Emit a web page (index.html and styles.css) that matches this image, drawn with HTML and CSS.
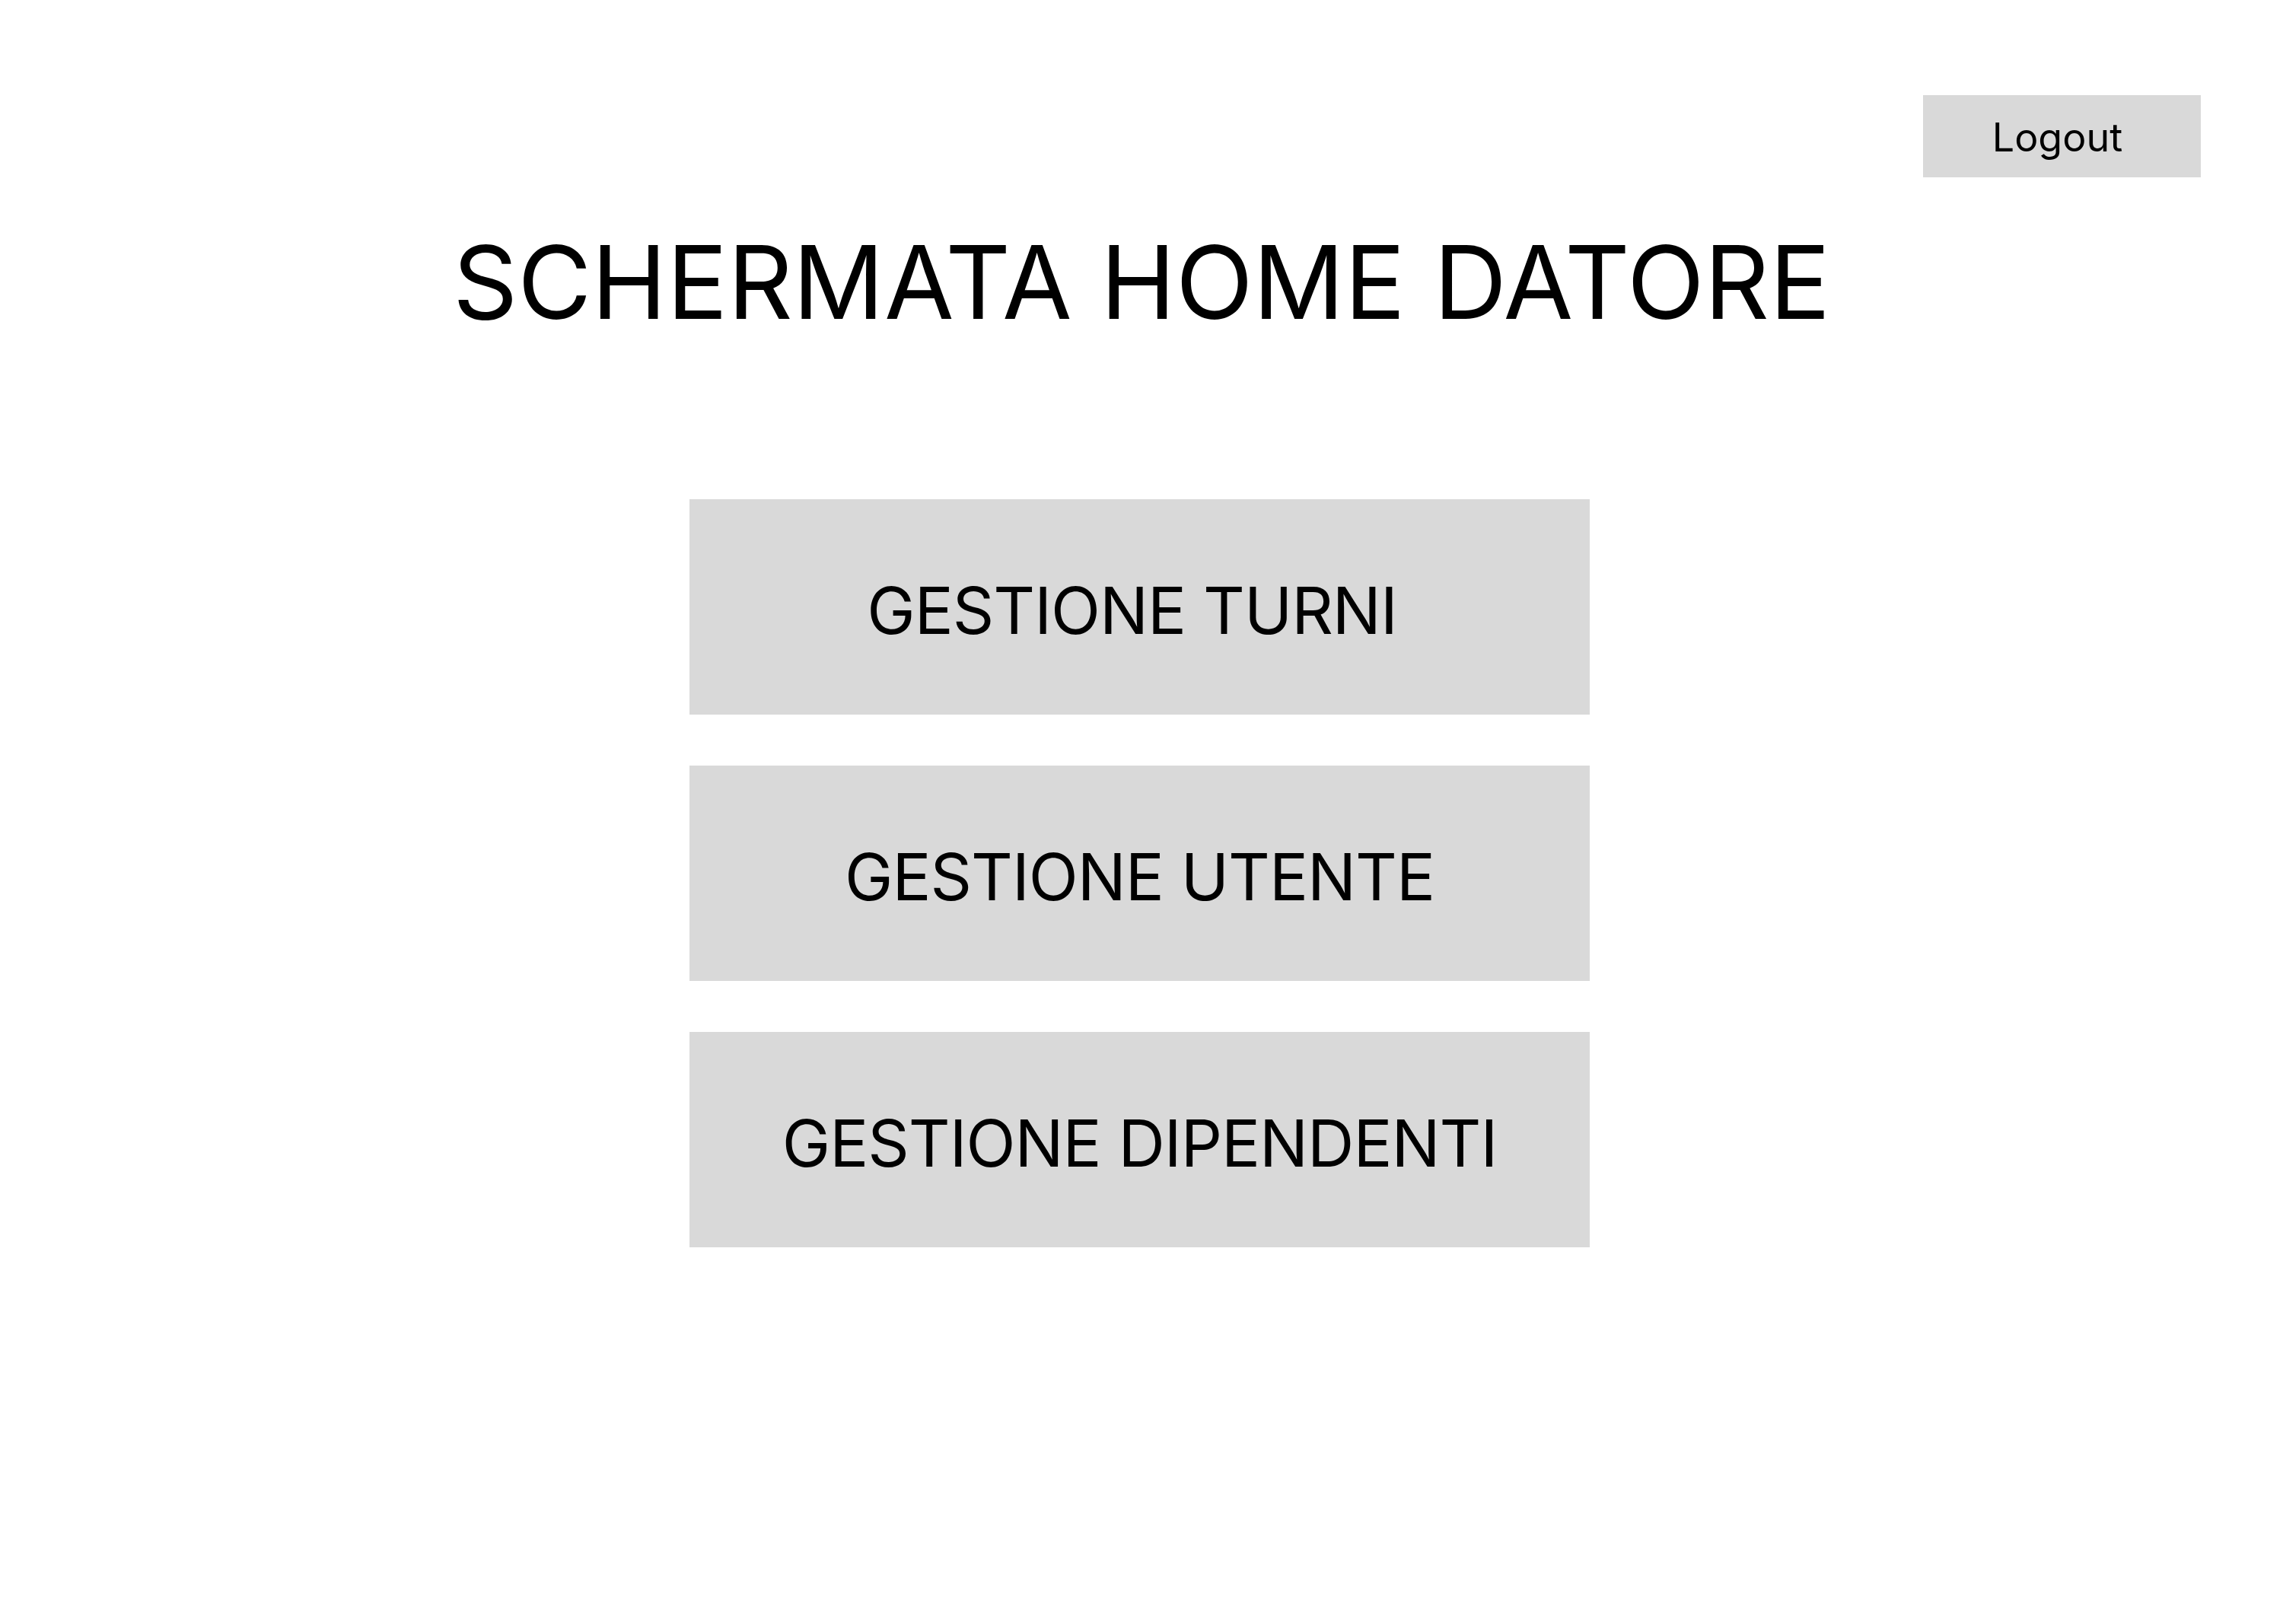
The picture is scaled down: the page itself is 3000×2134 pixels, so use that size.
FILE: index.html
```html
<!DOCTYPE html>
<html lang="it">
<head>
<meta charset="utf-8">
<title>Schermata Home Datore</title>
<link rel="stylesheet" href="styles.css">
</head>
<body>
<div class="page">
  <header class="topbar">
    <button class="logout">Logout</button>
  </header>
  <h1 class="title">SCHERMATA HOME DATORE</h1>
  <nav class="menu">
    <button class="menu-btn menu-btn--shifted">GESTIONE TURNI</button>
    <button class="menu-btn">GESTIONE UTENTE</button>
    <button class="menu-btn">GESTIONE DIPENDENTI</button>
  </nav>
</div>
</body>
</html>
```
FILE: styles.css
```css
html, body {
  margin: 0;
  padding: 0;
  background: #ffffff;
}
.page {
  width: 3000px;
  height: 2134px;
  font-family: Inter, "Noto Sans", sans-serif;
  color: #000;
  display: flex;
  flex-direction: column;
}
.topbar {
  display: flex;
  justify-content: flex-end;
  padding: 125px 108px 0 0;
}
.logout {
  width: 365px;
  height: 108px;
  background: #d9d9d9;
  border: none;
  margin: 0;
  padding: 4px 12px 0 0;
  font-family: Inter, "Noto Sans", sans-serif;
  font-size: 52px;
  line-height: 1;
  color: #000;
  display: flex;
  align-items: center;
  justify-content: center;
}
.title {
  margin: 71px 0 0 0;
  font-size: 133px;
  font-weight: 400;
  line-height: 1;
  text-align: center;
}
.menu {
  margin-top: 219px;
  display: flex;
  flex-direction: column;
  align-items: center;
  gap: 67px;
  padding-right: 5px;
}
.menu-btn {
  width: 1183px;
  height: 283px;
  background: #d9d9d9;
  border: none;
  margin: 0;
  padding: 10px 0 0 0;
  font-family: Inter, "Noto Sans", sans-serif;
  font-size: 85px;
  letter-spacing: -1px;
  line-height: 1;
  color: #000;
  display: flex;
  align-items: center;
  justify-content: center;
}
.menu-btn--shifted {
  padding-right: 20px;
}
```
